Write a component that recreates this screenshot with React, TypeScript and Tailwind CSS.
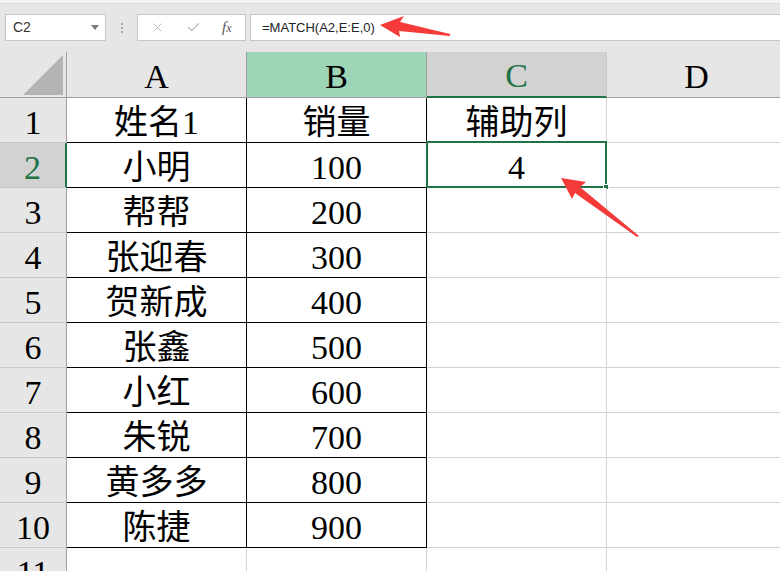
import { X, Check } from "lucide-react";

const rows = [
  { n: 1, a: "姓名1", b: "销量", c: "辅助列" },
  { n: 2, a: "小明", b: "100", c: "4" },
  { n: 3, a: "帮帮", b: "200", c: "" },
  { n: 4, a: "张迎春", b: "300", c: "" },
  { n: 5, a: "贺新成", b: "400", c: "" },
  { n: 6, a: "张鑫", b: "500", c: "" },
  { n: 7, a: "小红", b: "600", c: "" },
  { n: 8, a: "朱锐", b: "700", c: "" },
  { n: 9, a: "黄多多", b: "800", c: "" },
  { n: 10, a: "陈捷", b: "900", c: "" },
  { n: 11, a: "", b: "", c: "" },
];

const cellFont = {
  fontFamily: '"Liberation Serif", "Noto Sans CJK SC", serif',
};

export default function App() {
  return (
    <div
      className="relative h-[571px] w-[780px] overflow-hidden bg-[#e6e6e6] text-black"
      style={cellFont}
    >
      {/* Formula bar */}
      <div className="h-[52px] border-t-[3px] border-[#f3f3f3] shadow-[inset_0_1px_0_#dcdcdc]">
        <div
          className="mt-[11px] flex h-[27px] items-stretch text-[13px]"
          style={{ fontFamily: '"Liberation Sans", "Noto Sans", sans-serif' }}
        >
          <div className="ml-[5px] flex w-[101px] shrink-0 items-center justify-between border border-[#c6c6c6] bg-white pl-[7px] pr-[6px] text-[14px] text-[#333]">
            <span>C2</span>
            <span className="h-0 w-0 border-x-[4px] border-t-[5px] border-x-transparent border-t-[#777]" />
          </div>
          <div className="flex w-[31px] shrink-0 flex-col items-center justify-center gap-[2px]">
            <span className="h-[2px] w-[2px] bg-[#a8a8a8]" />
            <span className="h-[2px] w-[2px] bg-[#a8a8a8]" />
            <span className="h-[2px] w-[2px] bg-[#a8a8a8]" />
          </div>
          <div className="flex w-[109px] shrink-0 items-center border border-[#c6c6c6] bg-white pl-[12px]">
            <X className="h-[15px] w-[15px] text-[#bcbcbc]" strokeWidth={1.5} />
            <Check className="ml-[21px] h-[15px] w-[15px] text-[#bcbcbc]" strokeWidth={2.2} />
            <span
              className="ml-[21px] text-[15px] italic text-[#555]"
              style={{ fontFamily: '"Liberation Serif", serif' }}
            >
              f<span className="text-[12px]">x</span>
            </span>
          </div>
          <div className="ml-[4px] flex flex-1 items-center border border-r-0 border-[#c6c6c6] bg-white pl-[11px] text-[#222]">
            =MATCH(A2,E:E,0)
          </div>
        </div>
      </div>

      {/* Column headers */}
      <div className="flex h-[46px] text-[34px] leading-none">
        <div className="flex w-[67px] shrink-0 items-end justify-end border-r border-b border-[#a0a0a0] pb-[2px] pr-[3px]">
          <div className="h-[40px] w-[40px] bg-[#b4b4b4] [clip-path:polygon(100%_0,100%_100%,0_100%)]" />
        </div>
        <div className="flex w-[180px] shrink-0 items-center justify-center border-r border-b border-[#a0a0a0] pt-[4px]">
          A
        </div>
        <div className="flex w-[180px] shrink-0 items-center justify-center border-r border-b border-[#a0a0a0] bg-[#9fd5b7] pt-[4px]">
          B
        </div>
        <div className="flex w-[180px] shrink-0 items-center justify-center border-r border-b-2 border-r-[#c8c8c8] border-b-[#217346] bg-[#d2d2d2] pt-[4px] text-[#217346]">
          C
        </div>
        <div className="flex w-[180px] shrink-0 items-center justify-center border-r border-b border-r-[#d0d0d0] border-b-[#a0a0a0] pt-[4px]">
          D
        </div>
        <div className="flex-1 border-b border-[#a0a0a0]" />
      </div>

      {/* Grid rows */}
      {rows.map((r) => {
        const inTable = r.n <= 10;
        const sel = r.n === 2;
        return (
          <div key={r.n} className="flex h-[45px] text-[34px] leading-none">
            <div
              className={
                sel
                  ? "flex w-[67px] shrink-0 items-center justify-center border-r-2 border-b border-r-[#217346] border-b-[#c8c8c8] bg-[#d2d2d2] pt-[5px] text-[#217346]"
                  : "flex w-[67px] shrink-0 items-center justify-center border-r border-b border-r-[#a0a0a0] border-b-[#c8c8c8] pt-[5px]"
              }
            >
              {r.n}
            </div>
            <div
              className={
                inTable
                  ? "flex w-[180px] shrink-0 items-center justify-center border-r border-b border-black bg-white pt-[5px]"
                  : "flex w-[180px] shrink-0 items-center justify-center border-r border-b border-[#d4d4d4] bg-white pt-[5px]"
              }
            >
              {r.a}
            </div>
            <div
              className={
                inTable
                  ? "flex w-[180px] shrink-0 items-center justify-center border-r border-b border-black bg-white pt-[5px]"
                  : "flex w-[180px] shrink-0 items-center justify-center border-r border-b border-[#d4d4d4] bg-white pt-[5px]"
              }
            >
              {r.b}
            </div>
            <div className="relative flex w-[180px] shrink-0 items-center justify-center border-r border-b border-[#d4d4d4] bg-white pt-[5px]">
              {r.c}
              {sel && (
                <div className="absolute -top-[2px] -left-px -right-px -bottom-px border-2 border-[#217346]">
                  <div className="absolute -right-[4px] -bottom-[4px] h-[6px] w-[6px] border border-white bg-[#217346]" />
                </div>
              )}
            </div>
            <div className="w-[180px] shrink-0 border-r border-b border-[#d4d4d4] bg-white" />
            <div className="flex-1 border-b border-[#d4d4d4] bg-white" />
          </div>
        );
      })}

      {/* Red annotation arrows */}
      <svg
        className="pointer-events-none absolute left-0 top-0"
        width="780"
        height="571"
        viewBox="0 0 780 571"
      >
        <path
          d="M380 25 L404 16 L400 22 L450 34 L450 36 L399 31 L400 37 Z"
          fill="#f53a3a"
        />
        <path
          d="M561 178 L586 182 L580 187 L639 236 L637 237 L575 193 L572 199 Z"
          fill="#f53a3a"
        />
      </svg>
    </div>
  );
}
